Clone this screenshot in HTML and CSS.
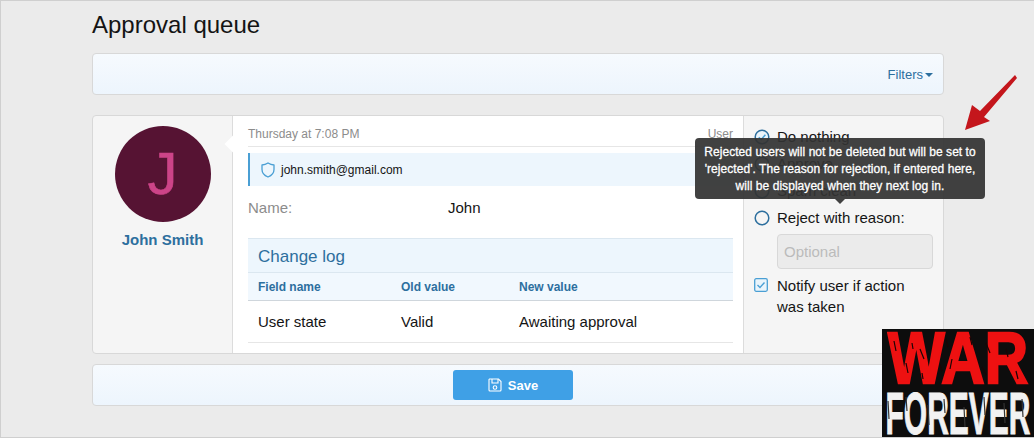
FILE: index.html
```html
<!DOCTYPE html>
<html lang="en">
<head>
  <meta charset="UTF-8">
  <title>Approval queue</title>
  <link rel="stylesheet" href="styles.css">
</head>
<body>
  <div class="page">
    <h1 class="page-title">Approval queue</h1>

    <!-- Filter bar -->
    <div class="bar bar-filters">
      <a class="filters-link">Filters<span class="caret"></span></a>
    </div>

    <!-- Queue item -->
    <div class="item">
      <div class="item-user">
        <div class="avatar">J</div>
        <div class="user-name">John Smith</div>
      </div>

      <div class="item-main">
        <div class="item-head">
          <span>Thursday at 7:08 PM</span>
          <span>User</span>
        </div>
        <div class="email-box">
          <svg class="shield" width="14" height="16" viewBox="0 0 14 16">
            <path d="M7 1 C5 2.3 3 2.9 1 3 V7.5 C1 11 3.500 13.600 7 15 C10.500 13.600 13 11 13 7.500 V3 C11 2.900 9 2.300 7 1 Z" fill="none" stroke="#4a9fd4" stroke-width="1.300" stroke-linejoin="round"/>
          </svg>
          <span>john.smith@gmail.com</span>
        </div>
        <div class="name-row">
          <span class="name-label">Name:</span>
          <span>John</span>
        </div>
        <div class="log">
          <div class="log-title">Change log</div>
          <div class="log-row log-labels">
            <span>Field name</span>
            <span>Old value</span>
            <span>New value</span>
          </div>
          <div class="log-row log-values">
            <span>User state</span>
            <span>Valid</span>
            <span>Awaiting approval</span>
          </div>
        </div>
      </div>

      <div class="item-actions">
        <div class="choice">
          <svg class="radio" width="16" height="16" viewBox="0 0 16 16">
            <circle cx="8" cy="8" r="6.800" fill="#eaf4fb" stroke="#2d6f9e" stroke-width="1.500"/>
            <path d="M4.800 8.200 L7.200 10.500 L11.400 5.800" fill="none" stroke="#4a9fd4" stroke-width="1.500"/>
          </svg>
          <span>Do nothing</span>
        </div>
        <div class="choice">
          <svg class="radio" width="16" height="16" viewBox="0 0 16 16"><circle cx="8" cy="8" r="6.800" fill="none" stroke="#2d6f9e" stroke-width="1.500"/></svg>
          <span>Approve</span>
        </div>
        <div class="choice">
          <svg class="radio" width="16" height="16" viewBox="0 0 16 16"><circle cx="8" cy="8" r="6.800" fill="none" stroke="#2d6f9e" stroke-width="1.500"/></svg>
          <span>Spam clean</span>
        </div>
        <div class="choice">
          <svg class="radio" width="16" height="16" viewBox="0 0 16 16"><circle cx="8" cy="8" r="6.800" fill="none" stroke="#2d6f9e" stroke-width="1.500"/></svg>
          <span>Reject with reason:</span>
        </div>
        <input class="reason" type="text" placeholder="Optional" disabled>
        <div class="choice choice-notify">
          <svg class="check" width="14" height="14" viewBox="0 0 14 14">
            <rect x="0.700" y="0.700" width="12.600" height="12.600" rx="1.500" fill="#eaf4fb" stroke="#4a9fd4" stroke-width="1.300"/>
            <path d="M3.500 7 L6 9.500 L10.500 4.500" fill="none" stroke="#4a9fd4" stroke-width="1.400"/>
          </svg>
          <span>Notify user if action was taken</span>
        </div>
      </div>
    </div>

    <!-- Save bar -->
    <div class="bar bar-save">
      <button class="save-button">
        <svg width="14" height="14" viewBox="0 0 14 14" fill="none" stroke="#fff" stroke-width="1.100">
          <path d="M1.500 1 H10.500 L13 3.500 V12 Q13 13 12 13 H2 Q1 13 1 12 V1.500 Z"/>
          <path d="M4 1 V5 H10 V1"/>
          <circle cx="7" cy="9.500" r="1.800"/>
        </svg>
        Save
      </button>
    </div>
  </div>

  <!-- Tooltip over the reject option -->
  <div class="tooltip">
    Rejected users will not be deleted but will be set to<br>
    'rejected'. The reason for rejection, if entered here,<br>
    will be displayed when they next log in.
  </div>

  <!-- Annotation arrow -->
  <svg class="annotation" width="56" height="60" viewBox="0 0 56 60">
    <path d="M52 2 L54 5 L21 44 L27 48 L2 57 L9 32 L17 38 Z" fill="#c4161c"/>
  </svg>

  <!-- Watermark -->
  <div class="stamp">
    <div class="stamp-war">WAR</div>
    <div class="stamp-forever">FOREVER</div>
    <svg class="stamp-scratches" width="152" height="109" viewBox="0 0 152 109" fill="none" stroke="#1a0505" stroke-width="1.200">
      <path d="M12 12 L14 22 M30 14 L31 20 M24 34 L26 44 M38 20 L42 30 M40 44 L41 50 M64 10 L66 18 M70 30 L68 40 M58 36 L60 42 M88 8 L90 16 M104 14 L108 24 M100 38 L104 46 M124 20 L126 28 M134 42 L136 50"/>
      <path d="M6 72 L7 90 M24 68 L25 82 M46 76 L47 96 M62 70 L63 84 M82 78 L83 98 M102 68 L103 86 M122 74 L123 94 M140 70 L141 88" stroke="#333"/>
    </svg>
  </div>
</body>
</html>
```

FILE: styles.css
```css
html, body {
  margin: 0;
  padding: 0;
  height: 100%;
  overflow: hidden;
}

body {
  box-sizing: border-box;
  height: 438px;
  position: relative;
  background: #ebebeb;
  border: 1px solid #cfcfcf;
  border-right: none;
  font-family: "Liberation Sans", Arial, sans-serif;
  font-size: 15px;
  color: #141414;
}

.page {
  width: 852px;
  margin-left: 91px;
}

.page-title {
  margin: 0;
  padding-top: 10px;
  height: 52px;
  box-sizing: border-box;
  font-size: 24px;
  line-height: 28px;
  font-weight: normal;
}

/* light blue bars */
.bar {
  box-sizing: border-box;
  height: 42px;
  display: flex;
  align-items: center;
  background: linear-gradient(#f6fafe, #edf5fd);
  border: 1px solid #d8d8d8;
  border-radius: 4px;
}

.bar-filters {
  justify-content: flex-end;
  padding-right: 10px;
  font-size: 13px;
}

.filters-link {
  color: #2d6f9e;
}

.caret {
  display: inline-block;
  margin-left: 2px;
  vertical-align: 2px;
  border-top: 4px solid #2d6f9e;
  border-left: 4px solid transparent;
  border-right: 4px solid transparent;
}

/* queue item */
.item {
  box-sizing: border-box;
  height: 239px;
  margin: 20px 0 10px;
  display: flex;
  background: #f5f5f5;
  border: 1px solid #d8d8d8;
  border-radius: 4px;
}

.item-user {
  box-sizing: border-box;
  width: 140px;
  padding-top: 10px;
  display: flex;
  flex-direction: column;
  align-items: center;
  border-right: 1px solid #dcdcdc;
}

.avatar {
  width: 96px;
  height: 96px;
  border-radius: 50%;
  background: #561333;
  color: #cc4488;
  font-size: 60px;
  line-height: 96px;
  text-align: center;
  -webkit-text-stroke: 0.6px #cc4488;
}

.user-name {
  margin-top: 9px;
  font-weight: bold;
  color: #2d6f9e;
}

.item-main {
  box-sizing: border-box;
  width: 511px;
  padding: 0 10px 0 15px;
  position: relative;
  background: #fff;
  border-right: 1px solid #dcdcdc;
}

.item-main::before {
  content: "";
  position: absolute;
  left: -6px;
  top: 22px;
  width: 12px;
  height: 12px;
  background: #fff;
  transform: rotate(45deg);
}

.item-head {
  display: flex;
  justify-content: space-between;
  height: 31px;
  box-sizing: border-box;
  padding-top: 11px;
  font-size: 12px;
  line-height: 14px;
  color: #8c8c8c;
  border-bottom: 1px solid #e6e6e6;
}

.email-box {
  box-sizing: border-box;
  height: 33px;
  margin-top: 6px;
  padding-left: 11px;
  display: flex;
  align-items: center;
  gap: 6px;
  background: #edf6fd;
  border-left: 2px solid #4a9fd4;
  font-size: 12px;
}

.name-row {
  display: flex;
  height: 52px;
  padding-top: 13px;
  box-sizing: border-box;
  line-height: 17px;
}

.name-label {
  width: 200px;
  color: #8c8c8c;
}

.log {
  border-top: 1px solid #dbe7f0;
}

.log-title {
  box-sizing: border-box;
  height: 34px;
  padding: 8px 10px 0;
  font-size: 17px;
  line-height: 20px;
  color: #2d6f9e;
  background: #edf6fd;
  border-bottom: 1px solid #dbe7f0;
}

.log-row {
  display: grid;
  grid-template-columns: 143px 118px 1fr;
  align-items: center;
  padding: 0 10px;
}

.log-labels {
  box-sizing: border-box;
  height: 28px;
  font-size: 12px;
  font-weight: bold;
  color: #2d6f9e;
  background: #f1f8fe;
  border-bottom: 1px solid #cfd6dc;
}

.log-values {
  box-sizing: border-box;
  height: 42px;
  border-bottom: 1px solid #e6e6e6;
}

/* right hand options */
.item-actions {
  flex: 1;
  padding: 7px 10px 0;
}

.choice {
  display: flex;
  align-items: center;
  gap: 7px;
  height: 27px;
}

.radio {
  flex: none;
}

.reason {
  box-sizing: border-box;
  display: block;
  width: 156px;
  height: 35px;
  margin: 3px 0 0 23px;
  padding: 0 6px;
  background: #ebebeb;
  border: 1px solid #d8d8d8;
  border-radius: 4px;
  font-family: inherit;
  font-size: 15px;
}

.reason::placeholder {
  color: #bbb;
}

.choice-notify {
  align-items: flex-start;
  height: auto;
  margin-top: 6px;
  gap: 9px;
  line-height: 21px;
}

.check {
  flex: none;
  margin-top: 3px;
}

.bar-save {
  justify-content: center;
  padding-right: 10px;
}

.save-button {
  width: 120px;
  height: 30px;
  display: flex;
  align-items: center;
  justify-content: center;
  gap: 6px;
  padding: 0;
  border: none;
  border-radius: 3px;
  background: #3fa0e6;
  color: #fff;
  font-family: inherit;
  font-size: 13px;
  font-weight: bold;
}

/* overlays */
.tooltip {
  position: absolute;
  left: 694px;
  top: 137px;
  box-sizing: border-box;
  width: 290px;
  height: 61px;
  padding-top: 6px;
  background: rgba(51, 51, 51, 0.93);
  border-radius: 4px;
  color: #fff;
  font-size: 12px;
  line-height: 17px;
  letter-spacing: 0.05px;
  text-align: center;
  white-space: nowrap;
  -webkit-text-stroke: 0.3px #fff;
}

.tooltip::after {
  content: "";
  position: absolute;
  left: 140px;
  top: 61px;
  border-top: 5px solid rgba(51, 51, 51, 0.93);
  border-left: 5px solid transparent;
  border-right: 5px solid transparent;
}

.annotation {
  position: absolute;
  left: 962px;
  top: 72px;
}

.stamp {
  position: absolute;
  left: 881px;
  top: 328px;
  width: 152px;
  height: 109px;
  background: #0d0d0d;
  overflow: hidden;
  text-align: center;
  font-weight: bold;
}

.stamp-war {
  height: 44px;
  margin-top: 8px;
  color: #ee1111;
  font-size: 60px;
  line-height: 44px;
  transform: scaleY(1.2);
  -webkit-text-stroke: 2px #ee1111;
}

.stamp-forever {
  height: 22px;
  margin-top: 23px;
  color: #f2f2f2;
  font-size: 30px;
  line-height: 22px;
  transform: scaleY(1.95);
  white-space: nowrap;
  -webkit-text-stroke: 0.5px #f2f2f2;
}

.stamp-scratches {
  position: absolute;
  left: 0;
  top: 0;
}
```
